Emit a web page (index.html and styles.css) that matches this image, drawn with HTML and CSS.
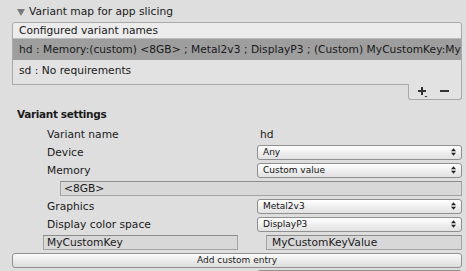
FILE: index.html
```html
<!DOCTYPE html>
<html>
<head>
<meta charset="utf-8">
<link rel="stylesheet" href="styles.css">
</head>
<body>
<div class="inspector">
  <div class="foldout"><span class="tri"></span><span>Variant map for app slicing</span></div>
  <div class="list">
    <div class="list-head">Configured variant names</div>
    <div class="list-body">
      <div class="item sel">hd : Memory:(custom) &lt;8GB&gt; ; Metal2v3 ; DisplayP3 ; (Custom) MyCustomKey:MyCustomKeyValue</div>
      <div class="item">sd : No requirements</div>
    </div>
  </div>
  <div class="list-foot-wrap">
    <div class="list-foot">
      <span class="plus"><svg width="12" height="12" viewBox="0 0 12 12"><rect x="1" y="4" width="8" height="2" fill="#333"/><rect x="4" y="1" width="2" height="8" fill="#333"/><path d="M7.5 10h3l-1.5 1.6z" fill="#333"/></svg></span>
      <span class="minus"><svg width="12" height="12" viewBox="0 0 12 12"><rect x="1" y="4" width="9" height="2" fill="#333"/></svg></span>
    </div>
  </div>

  <div class="section-title">Variant settings</div>

  <div class="row">
    <span class="label">Variant name</span>
    <span class="value">hd</span>
  </div>
  <div class="row">
    <span class="label">Device</span>
    <div class="popup"><span>Any</span><svg class="arrows" width="5" height="8" viewBox="0 0 5 8"><path d="M0 3.2h5L2.5 0.2z M0 4.8h5L2.5 7.8z" fill="#222"/></svg></div>
  </div>
  <div class="row">
    <span class="label">Memory</span>
    <div class="popup"><span>Custom value</span><svg class="arrows" width="5" height="8" viewBox="0 0 5 8"><path d="M0 3.2h5L2.5 0.2z M0 4.8h5L2.5 7.8z" fill="#222"/></svg></div>
  </div>
  <div class="row indent-field">
    <div class="field">&lt;8GB&gt;</div>
  </div>
  <div class="row">
    <span class="label">Graphics</span>
    <div class="popup"><span>Metal2v3</span><svg class="arrows" width="5" height="8" viewBox="0 0 5 8"><path d="M0 3.2h5L2.5 0.2z M0 4.8h5L2.5 7.8z" fill="#222"/></svg></div>
  </div>
  <div class="row">
    <span class="label">Display color space</span>
    <div class="popup"><span>DisplayP3</span><svg class="arrows" width="5" height="8" viewBox="0 0 5 8"><path d="M0 3.2h5L2.5 0.2z M0 4.8h5L2.5 7.8z" fill="#222"/></svg></div>
  </div>
  <div class="row kv">
    <div class="field key">MyCustomKey</div>
    <div class="field val">MyCustomKeyValue</div>
  </div>
  <div class="row btn-row">
    <div class="button">Add custom entry</div>
  </div>
  <div class="row last-row">
    <span class="label"></span>
    <div class="popup"><span></span></div>
  </div>
</div>
</body>
</html>
```

FILE: styles.css
```css
html, body {
  margin: 0;
  padding: 0;
  background: #dedede;
  overflow: hidden;
}
body {
  width: 466px;
  height: 271px;
  font-family: "DejaVu Sans", sans-serif;
  font-size: 10.7px;
  color: #1a1a1a;
}
.inspector {
  display: flex;
  flex-direction: column;
}
.inspector > * {
  flex-shrink: 0;
}
.foldout {
  display: flex;
  align-items: center;
  height: 16px;
  margin-top: 4px;
  padding-left: 17px;
  gap: 4px;
  line-height: 16px;
}
.tri {
  width: 0;
  height: 0;
  border-left: 4px solid transparent;
  border-right: 4px solid transparent;
  border-top: 7px solid #7a7a7a;
}
.list {
  margin: 2px 4px 0 12px;
  border: 1px solid #a9a9a9;
  border-radius: 3px 3px 0 0;
  background: #e2e2e2;
}
.list-head {
  height: 15px;
  line-height: 15px;
  padding-left: 6px;
  background: #ececec;
  border-bottom: 1px solid #bdbdbd;
  border-radius: 3px 3px 0 0;
}
.list-body {
  padding-bottom: 3px;
}
.item {
  height: 21px;
  line-height: 21px;
  padding-left: 6px;
  white-space: nowrap;
  overflow: hidden;
}
.item.sel {
  background: #9e9e9e;
}
.list-foot-wrap {
  display: flex;
  justify-content: flex-end;
  padding-right: 4px;
}
.list-foot {
  width: 44px;
  height: 15px;
  margin-top: -1px;
  border: 1px solid #a9a9a9;
  border-top: 0;
  border-radius: 0 0 3px 3px;
  background: #e2e2e2;
  display: flex;
  align-items: center;
  gap: 10px;
  padding: 0 0 0 8px;
  box-sizing: content-box;
}
.plus, .minus {
  display: flex;
}
.section-title {
  font-weight: bold;
  font-size: 10.5px;
  letter-spacing: -0.35px;
  height: 18px;
  line-height: 16px;
  margin-top: 6px;
  padding-left: 17px;
}
.row {
  display: flex;
  align-items: center;
  height: 16px;
  margin-top: 2px;
  padding-left: 47px;
  padding-right: 4px;
}
.label {
  flex: 0 0 210px;
  white-space: nowrap;
}
.value {
  padding-left: 3px;
}
.popup {
  flex: 1;
  box-sizing: border-box;
  height: 15px;
  border: 1px solid #8f8f8f;
  border-radius: 3px;
  background: linear-gradient(#ffffff, #ececec 60%, #e2e2e2);
  font-size: 9px;
  display: flex;
  align-items: center;
  justify-content: space-between;
  padding: 0 5px 0 5px;
  color: #111;
}
.arrows {
  display: block;
}
.indent-field {
  padding-left: 60px;
}
.field {
  flex: 1;
  height: 15px;
  box-sizing: border-box;
  border: 1px solid #a3a3a3;
  border-top-color: #8c8c8c;
  background: #d8d8d8;
  line-height: 13px;
  padding-left: 3px;
  white-space: nowrap;
  overflow: hidden;
}
.kv {
  padding-left: 43px;
  gap: 28px;
}
.field.key {
  flex: 0 0 195px;
}
.field.val {
  padding-left: 5px;
}
.btn-row {
  padding-left: 12px;
}
.button {
  flex: 1;
  height: 15px;
  box-sizing: border-box;
  border: 1px solid #919191;
  border-radius: 3px;
  background: linear-gradient(#fbfbfb, #e9e9e9 60%, #dcdcdc);
  font-size: 9px;
  line-height: 13px;
  text-align: center;
}
.last-row {
  margin-top: 1px;
}
```
